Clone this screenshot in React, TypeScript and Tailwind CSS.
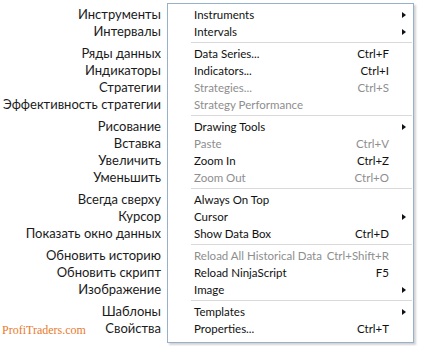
import React from "react";

type Item = { en: string; ru: string; sc?: string; dis?: boolean; sub?: boolean };

const groups: Item[][] = [
  [
    { en: "Instruments", ru: "Инструменты", sub: true },
    { en: "Intervals", ru: "Интервалы", sub: true },
  ],
  [
    { en: "Data Series...", ru: "Ряды данных", sc: "Ctrl+F" },
    { en: "Indicators...", ru: "Индикаторы", sc: "Ctrl+I" },
    { en: "Strategies...", ru: "Стратегии", sc: "Ctrl+S", dis: true },
    { en: "Strategy Performance", ru: "Эффективность стратегии", dis: true },
  ],
  [
    { en: "Drawing Tools", ru: "Рисование", sub: true },
    { en: "Paste", ru: "Вставка", sc: "Ctrl+V", dis: true },
    { en: "Zoom In", ru: "Увеличить", sc: "Ctrl+Z" },
    { en: "Zoom Out", ru: "Уменьшить", sc: "Ctrl+O", dis: true },
  ],
  [
    { en: "Always On Top", ru: "Всегда сверху" },
    { en: "Cursor", ru: "Курсор", sub: true },
    { en: "Show Data Box", ru: "Показать окно данных", sc: "Ctrl+D" },
  ],
  [
    { en: "Reload All Historical Data", ru: "Обновить историю", sc: "Ctrl+Shift+R", dis: true },
    { en: "Reload NinjaScript", ru: "Обновить скрипт", sc: "F5" },
    { en: "Image", ru: "Изображение", sub: true },
  ],
  [
    { en: "Templates", ru: "Шаблоны", sub: true },
    { en: "Properties...", ru: "Свойства", sc: "Ctrl+T" },
  ],
];

function Arrow() {
  return (
    <svg width="4" height="6" viewBox="0 0 4 6" className="block">
      <path d="M0 0 L4 3 L0 6 Z" fill="#111" />
    </svg>
  );
}

export default function App() {
  return (
    <div className="relative w-[424px] h-[346px] bg-white overflow-hidden">
      <div className="flex pt-[3px]">
        {/* Russian labels */}
        <div
          className="w-[161px] pt-[3px] flex flex-col items-end text-[13px] text-[#1b1b1b] leading-none"
          style={{ fontFamily: 'Lato, "Noto Sans", sans-serif' }}
        >
          {groups.map((g, gi) => (
            <React.Fragment key={gi}>
              {gi > 0 && <div className="h-[5px]" />}
              {g.map((it) => (
                <div key={it.ru} className="h-[17px] flex items-center whitespace-nowrap">
                  {it.ru}
                </div>
              ))}
            </React.Fragment>
          ))}
        </div>

        {/* Context menu */}
        <div
          className="ml-[6px] w-[247px] h-[340px] border border-[#97b0cc] bg-white pt-[2px] shadow-[2px_2px_2px_rgba(0,0,0,0.18)] text-[11.5px] leading-none"
          style={{ fontFamily: 'Lato, "Noto Sans", sans-serif' }}
        >
          {groups.map((g, gi) => (
            <React.Fragment key={gi}>
              {gi > 0 && (
                <div className="h-[5px] flex items-center pl-[23px] pr-[1px]">
                  <div className="h-[2px] w-full border-t border-[#d9d9d9] border-b border-b-white" />
                </div>
              )}
              {g.map((it) => (
                <div
                  key={it.en}
                  className={
                    "h-[17px] flex items-center pl-[26px] pr-[7px] whitespace-nowrap " +
                    (it.dis ? "text-[#8e8e8e]" : "text-[#111111]")
                  }
                >
                  <span className="flex-1">{it.en}</span>
                  {it.sc && <span className="mr-[17px]">{it.sc}</span>}
                  {it.sub && <Arrow />}
                </div>
              ))}
            </React.Fragment>
          ))}
        </div>
      </div>

      <div
        className="absolute left-[2px] top-[321px] text-[12px] text-[#e87a2e]"
        style={{ fontFamily: '"Liberation Serif", serif' }}
      >
        ProfiTraders.com
      </div>
    </div>
  );
}
